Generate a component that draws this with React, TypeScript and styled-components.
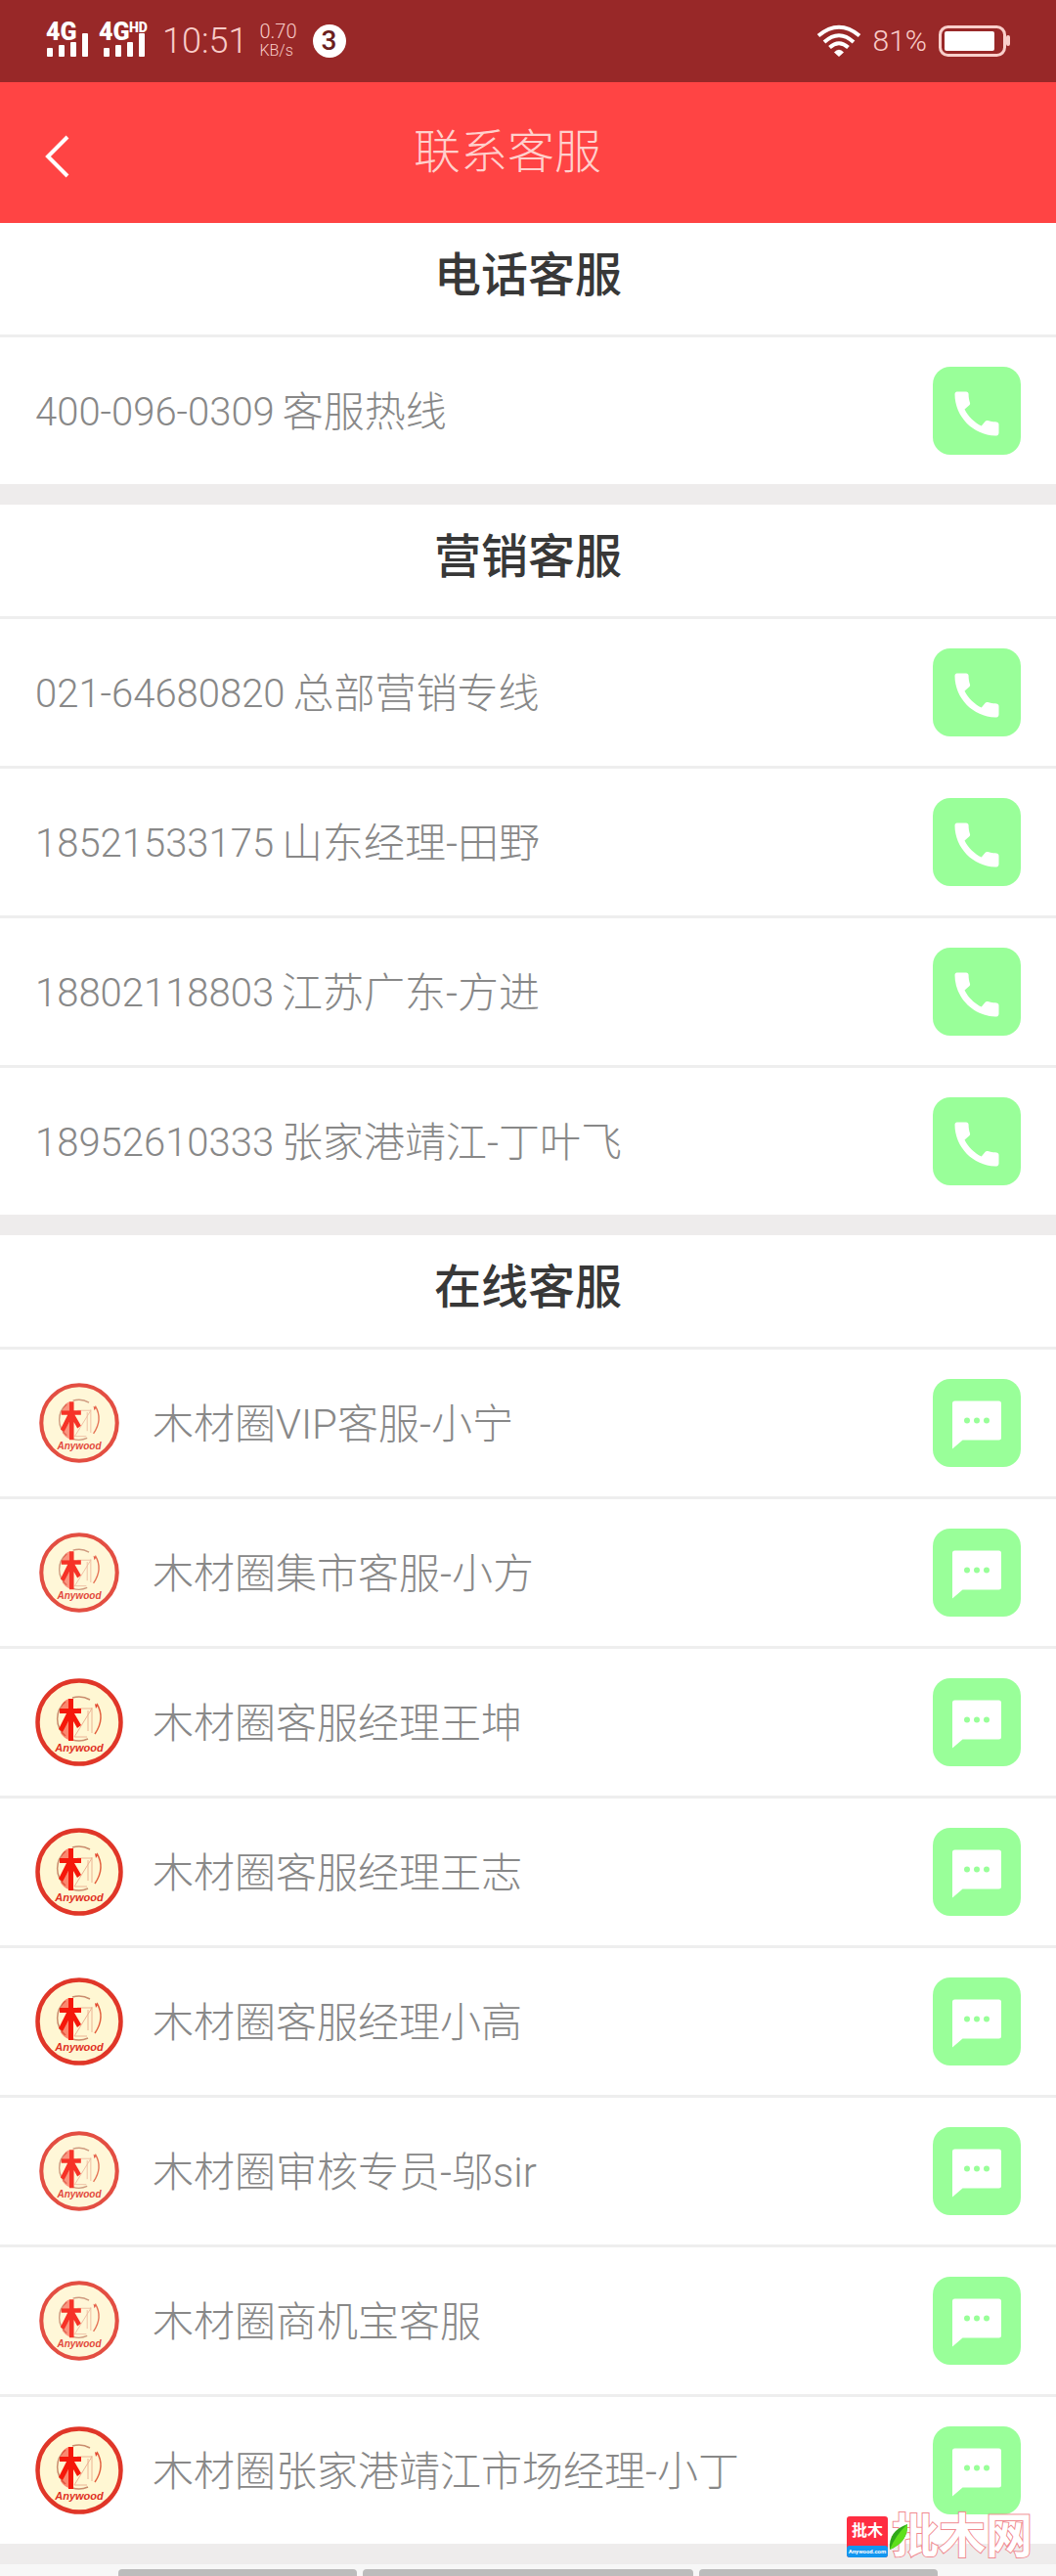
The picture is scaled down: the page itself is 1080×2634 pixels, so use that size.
import React from 'react';
import styled, { createGlobalStyle } from 'styled-components';

const GlobalStyle = createGlobalStyle`
  * { box-sizing: border-box; }
  body {
    margin: 0;
    background: #f7f7f7;
    font-family: Roboto, 'Noto Sans CJK SC', sans-serif;
    font-weight: 300;
  }
`;

const Page = styled.div`
  position: relative;
  width: 100%;
  overflow: hidden;
`;

const StatusBar = styled.div`
  display: flex;
  align-items: center;
  justify-content: space-between;
  height: 84px;
  padding: 0 46px 0 38px;
  background: #982828;
  color: #f8ccc8;
`;

const StatusGroup = styled.div`
  display: flex;
  align-items: center;
  gap: 12px;
`;

const Clock = styled.time`
  font-size: 36px;
  line-height: 40px;
`;

const Speed = styled.span`
  display: flex;
  flex-direction: column;
  font-size: 20px;
  line-height: 20px;
`;

const Unit = styled.span`
  font-size: 16px;
`;

const Notice = styled.span`
  width: 34px;
  margin-left: 4px;
  border-radius: 50%;
  background: #fff;
  color: #6b1f1f;
  font-size: 28px;
  font-weight: 500;
  line-height: 34px;
  text-align: center;
`;

const Percent = styled.span`
  font-size: 30px;
  line-height: 40px;
`;

const Header = styled.header`
  display: grid;
  grid-template-columns: 120px 1fr 162px;
  align-items: center;
  height: 144px;
  background: #ff4444;
`;

const BackButton = styled.button`
  display: flex;
  align-items: center;
  height: 100%;
  padding: 8px 0 0 44px;
  border: 0;
  background: none;
`;

const PageTitle = styled.h1`
  margin: 0;
  color: #ffd0cc;
  font-size: 48px;
  font-weight: 300;
  line-height: 64px;
  text-align: center;
`;

const Section = styled.section`
  border-bottom: 21px solid #eeecec;
  background: #fff;
`;

const SectionTitle = styled.h2`
  height: 117px;
  margin: 0;
  padding-top: 22px;
  border-bottom: 3px solid #eeeeee;
  color: #383838;
  font-size: 48px;
  font-weight: 500;
  line-height: 64px;
  text-align: center;
`;

const List = styled.ul`
  margin: 0;
  padding: 0;
  list-style: none;
`;

const Row = styled.li`
  display: flex;
  align-items: center;
  justify-content: space-between;
  padding: 30px 36px;
  border-bottom: 3px solid #eeeeee;

  &:last-child {
    border-bottom: 0;
  }
`;

const Contact = styled.div`
  display: flex;
  align-items: center;
  color: #888;
  font-size: 42px;
  line-height: 60px;
`;

const Label = styled.span`
  padding-top: 4px;
`;

const PhoneNumber = styled.span`
  margin-right: 8px;
  padding-top: 4px;
  font-size: 40px;
`;

const AvatarSlot = styled.span<{ $offline?: boolean }>`
  display: flex;
  justify-content: center;
  width: 90px;
  margin-right: 30px;
  opacity: ${(p) => (p.$offline ? 0.88 : 1)};
`;

const CallLink = styled.a`
  display: flex;
  align-items: center;
  justify-content: center;
  width: 90px;
  height: 90px;
  padding-top: 6px;
  border-radius: 18px;
  background: #99ff99;
`;

const ChatButton = styled.button`
  display: flex;
  align-items: center;
  justify-content: center;
  width: 90px;
  height: 90px;
  padding: 0;
  border: 0;
  border-radius: 18px;
  background: #99ff99;
`;

const TabBar = styled.div`
  display: grid;
  grid-template-columns: 244fr 338fr 244fr;
  gap: 6px;
  height: 12px;
  padding: 5px 121px 0;
`;

const TabEdge = styled.span`
  border-radius: 4px 4px 0 0;
  background: #bcbcbc;
`;

const Watermark = styled.div`
  position: absolute;
  right: 24px;
  bottom: 16px;
  display: flex;
  align-items: center;
  gap: 4px;
`;

const Badge = styled.span`
  display: flex;
  flex-direction: column;
  width: 42px;
  height: 42px;
  border-radius: 3px;
  overflow: hidden;
  background: #ff2d41;
  color: #fff;
  font-size: 16px;
  font-weight: 700;
  line-height: 30px;
  text-align: center;
`;

const BadgeSite = styled.span`
  height: 12px;
  border-radius: 3px 3px 0 0;
  background: #1296f0;
  font-size: 6px;
  line-height: 12px;
`;

const Brand = styled.span`
  position: relative;
  color: #fff;
  font-size: 48px;
  font-weight: 700;
  line-height: 48px;
  -webkit-text-stroke: 2px #f08a90;
  paint-order: stroke fill;
`;

const Leaf = styled.svg`
  position: absolute;
  left: -4px;
  top: 10px;
`;

const Signals = () => (
  <svg width="116" height="60" viewBox="38 12 116 60" role="img" aria-label="4G 4G HD">
    <g fill="#fff" fontFamily="Roboto, sans-serif" fontWeight="900">
      <text x="47" y="41" fontSize="25">4G</text>
      <text x="101" y="41" fontSize="25">4G</text>
      <text x="132" y="33" fontSize="14">HD</text>
      <rect x="48" y="49" width="6" height="9" rx="1" />
      <rect x="60" y="46" width="6" height="12" rx="1" />
      <rect x="72" y="43" width="6" height="15" rx="1" />
      <rect x="84" y="34" width="6" height="24" rx="1" />
      <rect x="106" y="49" width="6" height="9" rx="1" />
      <rect x="118" y="46" width="6" height="12" rx="1" />
      <rect x="130" y="43" width="6" height="15" rx="1" />
      <rect x="142" y="34" width="6" height="24" rx="1" />
    </g>
  </svg>
);

const Wifi = () => (
  <svg width="46" height="34" viewBox="0 0 46 34" fill="none" stroke="#fff" strokeWidth="4" aria-hidden="true">
    <path d="M2 11.5Q23-6 44 11.5" />
    <path d="M8 18Q23 4.500 38 18" />
    <path d="M13.500 23.500Q23 15 32.500 23.500" />
    <path d="M18 28.500Q23 23 28 28.500L23 33Z" fill="#fff" stroke="none" />
  </svg>
);

const Battery = () => (
  <svg width="74" height="34" viewBox="0 0 74 34" aria-hidden="true">
    <rect x="1.500" y="2.500" width="66" height="29" rx="8" fill="none" stroke="#f9cfcb" strokeWidth="3" />
    <rect x="6" y="7" width="51" height="20" rx="2" fill="#fff" />
    <rect x="69" y="11" width="4" height="11" rx="2" fill="#f9cfcb" />
  </svg>
);

const BackArrow = () => (
  <svg width="28" height="44" viewBox="0 0 28 44" fill="none" stroke="#fff" strokeWidth="4" aria-hidden="true">
    <path d="M25 2L5 22L25 42" />
  </svg>
);

const PhoneIcon = () => (
  <svg width="60" height="60" viewBox="0 0 24 24" fill="#fff" aria-hidden="true">
    <path d="M20.010 15.380c-1.230 0-2.420-.2-3.530-.56-.35-.12-.74-.03-1.010.24l-1.570 1.970c-2.830-1.350-5.480-3.900-6.890-6.830l1.950-1.660c.27-.28.35-.67.24-1.020-.37-1.110-.56-2.300-.56-3.530 0-.54-.45-.99-.99-.99H4.190C3.650 3 3 3.240 3 3.990 3 13.280 10.730 21 20.010 21c.71 0 .99-.63.99-1.180v-3.450c0-.54-.45-.99-.99-.99z" />
  </svg>
);

const ChatIcon = () => (
  <svg width="60" height="60" viewBox="0 0 24 24" aria-hidden="true">
    <path d="M3 3h18a1 1 0 0 1 1 1v14a1 1 0 0 1-1 1H6.200L2 22.600V4a1 1 0 0 1 1-1z" fill="#fff" />
    <g fill="#99ff99">
      <circle cx="8" cy="11" r="1.200" />
      <circle cx="12" cy="11" r="1.200" />
      <circle cx="16" cy="11" r="1.200" />
    </g>
  </svg>
);

const Avatar = ({ size }: { size: number }) => (
  <svg width={size} height={size} viewBox="0 0 90 90" role="img" aria-label="Anywood">
    <circle cx="45" cy="45" r="42.500" fill="#fff7d3" stroke="#e03628" strokeWidth="4.500" />
    <path d="M38 20A22.500 22.500 0 0 1 56 22M31 24A22.500 22.500 0 0 0 31 59M38 63A22.500 22.500 0 0 0 54 62" fill="none" stroke="#c98d6e" strokeWidth="1.500" />
    <path d="M63 26Q72 41 61 57" fill="none" stroke="#e2603f" strokeWidth="1.500" />
    <path d="M61 26l3 2-2 3z" fill="#e2402c" />
    <path d="M43 31H58L40 60H53M54 33V54M58 30V56" fill="none" stroke="#ecb394" strokeWidth="1" />
    <path d="M34 21h5v10h8v5h-7l7 12-4 3-4-7v20h-5V44l-6 11-4-3 8-16h-7v-5h9z" fill="#f5180a" />
    <path d="M34 21Q28 23 26 31h8z" fill="#f5180a" opacity=".5" />
    <path d="M34 63Q29 61 26 56l8-12z" fill="#f5180a" opacity=".5" />
    <text x="45" y="75" fill="#e0301f" fontFamily="Liberation Sans, sans-serif" fontSize="11" fontStyle="italic" fontWeight="700" textAnchor="middle">Anywood</text>
  </svg>
);

interface PhoneContact { number: string; label: string }
interface Agent { name: string; offline?: boolean }

const phoneSections: { title: string; contacts: PhoneContact[] }[] = [
  { title: '电话客服', contacts: [{ number: '400-096-0309', label: '客服热线' }] },
  {
    title: '营销客服',
    contacts: [
      { number: '021-64680820', label: '总部营销专线' },
      { number: '18521533175', label: '山东经理-田野' },
      { number: '18802118803', label: '江苏广东-方进' },
      { number: '18952610333', label: '张家港靖江-丁叶飞' },
    ],
  },
];

const agents: Agent[] = [
  { name: '木材圈VIP客服-小宁', offline: true },
  { name: '木材圈集市客服-小方', offline: true },
  { name: '木材圈客服经理王坤' },
  { name: '木材圈客服经理王志' },
  { name: '木材圈客服经理小高' },
  { name: '木材圈审核专员-邬sir', offline: true },
  { name: '木材圈商机宝客服', offline: true },
  { name: '木材圈张家港靖江市场经理-小丁' },
];

export default function App() {
  return (
    <Page>
      <GlobalStyle />
      <StatusBar>
        <StatusGroup>
          <Signals />
          <Clock>10:51</Clock>
          <Speed>
            0.70
            <Unit>KB/s</Unit>
          </Speed>
          <Notice>3</Notice>
        </StatusGroup>
        <StatusGroup>
          <Wifi />
          <Percent>81%</Percent>
          <Battery />
        </StatusGroup>
      </StatusBar>
      <Header>
        <BackButton aria-label="返回">
          <BackArrow />
        </BackButton>
        <PageTitle>联系客服</PageTitle>
      </Header>
      <main>
        {phoneSections.map((section) => (
          <Section key={section.title}>
            <SectionTitle>{section.title}</SectionTitle>
            <List>
              {section.contacts.map((c) => (
                <Row key={c.number}>
                  <Contact>
                    <PhoneNumber>{c.number}</PhoneNumber>
                    <Label>{c.label}</Label>
                  </Contact>
                  <CallLink href={`tel:${c.number}`} aria-label={`拨打 ${c.number}`}>
                    <PhoneIcon />
                  </CallLink>
                </Row>
              ))}
            </List>
          </Section>
        ))}
        <Section>
          <SectionTitle>在线客服</SectionTitle>
          <List>
            {agents.map((a) => (
              <Row key={a.name}>
                <Contact>
                  <AvatarSlot $offline={a.offline}>
                    <Avatar size={a.offline ? 82 : 90} />
                  </AvatarSlot>
                  <Label>{a.name}</Label>
                </Contact>
                <ChatButton aria-label={`联系 ${a.name}`}>
                  <ChatIcon />
                </ChatButton>
              </Row>
            ))}
          </List>
        </Section>
      </main>
      <TabBar>
        <TabEdge />
        <TabEdge />
        <TabEdge />
      </TabBar>
      <Watermark>
        <Badge>
          批木
          <BadgeSite>Anywood.com</BadgeSite>
        </Badge>
        <Brand>
          批木网
          <Leaf width="22" height="28" viewBox="0 0 22 28" aria-hidden="true">
            <path d="M2 27Q0 8 20 1Q21 19 2 27Z" fill="#2fa81a" />
            <path d="M2 27Q8 12 20 1Q21 19 2 27Z" fill="#5fe01c" />
          </Leaf>
        </Brand>
      </Watermark>
    </Page>
  );
}
